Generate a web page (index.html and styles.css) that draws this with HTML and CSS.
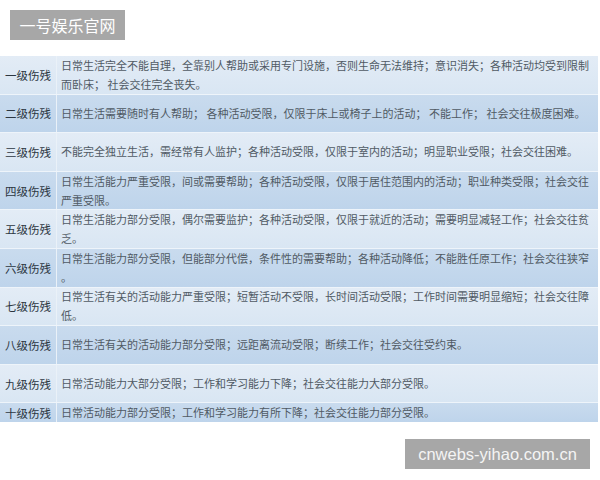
FILE: index.html
```html
<!DOCTYPE html>
<html lang="zh-CN">
<head>
<meta charset="utf-8">
<title>伤残等级</title>
<link rel="stylesheet" href="styles.css">
</head>
<body>
<div class="page">
  <div class="top">
    <div class="mark mark-top">一号娱乐官网</div>
  </div>
  <div class="table">
    <div class="row light"><div class="label">一级伤残</div><div class="desc">日常生活完全不能自理，全靠别人帮助或采用专门设施，否则生命无法维持；意识消失；各种活动均受到限制<br>而卧床； 社会交往完全丧失。</div></div>
    <div class="row dark"><div class="label">二级伤残</div><div class="desc">日常生活需要随时有人帮助； 各种活动受限，仅限于床上或椅子上的活动； 不能工作； 社会交往极度困难。</div></div>
    <div class="row light"><div class="label">三级伤残</div><div class="desc">不能完全独立生活，需经常有人监护；各种活动受限，仅限于室内的活动；明显职业受限；社会交往困难。</div></div>
    <div class="row dark"><div class="label">四级伤残</div><div class="desc">日常生活能力严重受限，间或需要帮助；各种活动受限，仅限于居住范围内的活动；职业种类受限；社会交往<br>严重受限。</div></div>
    <div class="row light"><div class="label">五级伤残</div><div class="desc">日常生活能力部分受限，偶尔需要监护；各种活动受限，仅限于就近的活动；需要明显减轻工作；社会交往贫<br>乏。</div></div>
    <div class="row dark"><div class="label">六级伤残</div><div class="desc">日常生活能力部分受限，但能部分代偿，条件性的需要帮助；各种活动降低；不能胜任原工作；社会交往狭窄<br>。</div></div>
    <div class="row light"><div class="label">七级伤残</div><div class="desc">日常生活有关的活动能力严重受限；短暂活动不受限，长时间活动受限；工作时间需要明显缩短；社会交往障<br>低。</div></div>
    <div class="row dark"><div class="label">八级伤残</div><div class="desc">日常生活有关的活动能力部分受限；远距离流动受限；断续工作；社会交往受约束。</div></div>
    <div class="row light"><div class="label">九级伤残</div><div class="desc">日常活动能力大部分受限；工作和学习能力下降；社会交往能力大部分受限。</div></div>
    <div class="row dark last"><div class="label">十级伤残</div><div class="desc">日常活动能力部分受限；工作和学习能力有所下降；社会交往能力部分受限。</div></div>
  </div>
  <div class="bottom">
    <div class="mark mark-bottom">cnwebs-yihao.com.cn</div>
  </div>
</div>
</body>
</html>
```
FILE: styles.css
```css
html, body {
  margin: 0;
  padding: 0;
  background: #ffffff;
}
body {
  font-family: "Noto Sans CJK SC", "Noto Sans", sans-serif;
  width: 600px;
  height: 480px;
  overflow: hidden;
}
.page {
  display: flex;
  flex-direction: column;
}
.top {
  padding: 10px 10px 0 10px;
  display: flex;
}
.mark {
  background: #a7a7a7;
  color: #ffffff;
  height: 30px;
  display: flex;
  align-items: center;
  justify-content: center;
  box-sizing: border-box;
}
.mark-top {
  width: 115px;
  font-size: 16px;
  letter-spacing: 0px;
}
.table {
  margin-top: 16px;
  width: 598px;
  display: flex;
  flex-direction: column;
}
.row {
  display: grid;
  grid-template-columns: 57px 1fr;
  height: 38.6px;
  box-sizing: border-box;
  border-bottom: 1px solid #eef4fa;
}
.row.last {
  height: 19px;
  border-bottom: none;
}
.row.light {
  background: linear-gradient(#e3ecf6, #d9e6f3);
}
.row.dark {
  background: linear-gradient(#c9dbee, #bed4eb);
}
.label {
  display: flex;
  align-items: center;
  justify-content: center;
  font-size: 11.5px;
  color: #2c3641;
  border-right: 1px solid #eaf1f8;
  white-space: nowrap;
}
.desc {
  display: flex;
  align-items: center;
  padding-left: 4px;
  font-size: 11px;
  line-height: 19px;
  color: #505a64;
  white-space: nowrap;
  overflow: hidden;
}
.bottom {
  display: flex;
  justify-content: flex-end;
  padding-right: 10px;
  margin-top: 17px;
}
.mark-bottom {
  width: 185px;
  font-family: "Liberation Sans", "Noto Sans", sans-serif;
  font-size: 16.5px;
  color: #f4f4f4;
}
```
